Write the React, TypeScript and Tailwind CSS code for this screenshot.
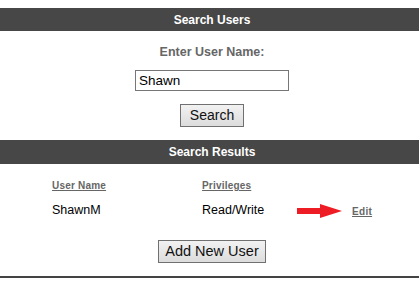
export default function App() {
  return (
    <div className="w-[419px] h-[300px] bg-white font-['Liberation_Sans',Arial,sans-serif] overflow-hidden">
      <div className="h-2" />
      <div className="h-[23px] bg-[#474747] flex items-center justify-center pl-[5px]">
        <span className="text-white text-[12px] font-bold">Search Users</span>
      </div>
      <div className="flex flex-col items-center pl-[5px]">
        <div className="mt-[13px] h-[16px] flex items-center text-[12.5px] font-bold text-[#666]">
          Enter User Name:
        </div>
        <input
          type="text"
          defaultValue="Shawn"
          className="mt-[10px] w-[154px] h-[21px] border border-[#777] px-[3px] text-[13.5px] leading-[19px] text-black outline-none"
        />
        <button className="mt-[13px] w-[64px] h-[23px] border border-[#707070] bg-gradient-to-b from-[#f2f2f2] to-[#dcdcdc] text-[14px] leading-[21px] text-[#111]">
          Search
        </button>
      </div>
      <div className="mt-[13px] h-[24px] bg-[#474747] flex items-center justify-center pl-[5px]">
        <span className="text-white text-[12px] font-bold">Search Results</span>
      </div>
      <div className="flex mt-[15px] h-[13px] items-center text-[10px] font-bold text-[#666] tracking-[0.2px]">
        <span className="ml-[52px] w-[150px] underline">User Name</span>
        <span className="underline">Privileges</span>
      </div>
      <div className="flex mt-[10px] h-[16px] items-center text-[12.5px] text-black">
        <span className="ml-[52px] w-[150px]">ShawnM</span>
        <span className="w-[95px]">Read/Write</span>
        <svg width="45" height="14" viewBox="0 0 45 14" className="mt-[2px]">
          <polygon points="0,4 23,4 23,0 45,7 23,14 23,10 0,10" fill="#ee1c25" />
        </svg>
        <span className="ml-[10px] text-[10px] font-bold text-[#666] underline tracking-[0.3px] mt-[2px]">Edit</span>
      </div>
      <div className="flex justify-center pl-[5px]">
        <button className="mt-[22px] w-[108px] h-[23px] border border-[#707070] bg-gradient-to-b from-[#f2f2f2] to-[#dcdcdc] text-[14.5px] leading-[21px] text-[#111]">
          Add New User
        </button>
      </div>
      <div className="mt-[13px] h-[2px] bg-[#444]" />
    </div>
  )
}
